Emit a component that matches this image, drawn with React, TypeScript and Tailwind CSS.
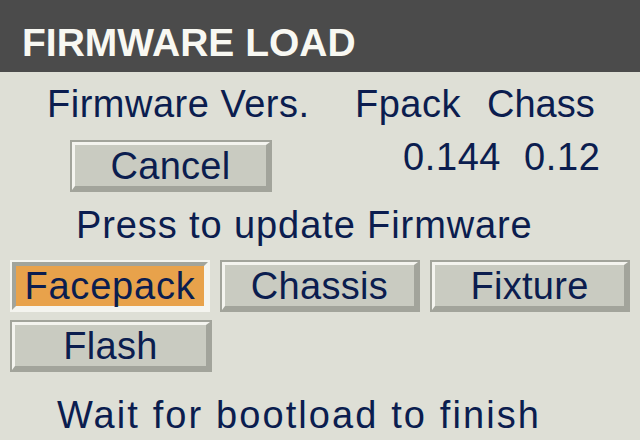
import React from "react";

function Raised({ w, label }: { w: string; label: string }) {
  return (
    <div className={`${w} h-[52px] border-2 border-[#a2a49b] flex shrink-0`}>
      <div className="flex-1 flex items-center justify-center bg-[#c9cbc1] border-t-[3px] border-l-[3px] border-b-[4px] border-r-[4px] border-t-[#f4f4ef] border-l-[#f4f4ef] border-b-[#a2a49b] border-r-[#a2a49b]">
        <span className="text-[38px] leading-[38px] tracking-[0.3px]">{label}</span>
      </div>
    </div>
  );
}

function Pressed({ w, label }: { w: string; label: string }) {
  return (
    <div className={`${w} h-[52px] border-2 border-[#f4f4ef] flex shrink-0`}>
      <div className="flex-1 flex items-center justify-center bg-[#e8a24b] border-t-4 border-l-4 border-b-[4px] border-r-[4px] border-t-[#a2a49b] border-l-[#a2a49b] border-b-[#f4f4ef] border-r-[#f4f4ef]">
        <span className="text-[38px] leading-[38px] tracking-[0.8px]">{label}</span>
      </div>
    </div>
  );
}

export default function App() {
  return (
    <div className="w-[640px] h-[440px] overflow-hidden bg-[#dedfd6] text-[#0b1d4f] font-['Liberation_Sans',Arial,sans-serif]">
      <div className="h-[72px] bg-[#4b4b4b] pl-[22px] pt-[23px]">
        <span className="text-[39px] leading-[39px] font-bold text-[#f8f8f2] block">FIRMWARE LOAD</span>
      </div>
      <div className="mt-[13px] h-[38px] flex text-[38px] leading-[38px] tracking-[0.5px]">
        <span className="ml-[47px] w-[308px]">Firmware Vers.</span>
        <span className="w-[132px]">Fpack</span>
        <span className="tracking-[0px]">Chass</span>
      </div>
      <div className="mt-[17px] flex items-start">
        <div className="ml-[70px]">
          <Raised w="w-[202px]" label="Cancel" />
        </div>
        <span className="ml-[131px] -mt-[2px] w-[121px] text-[38px] leading-[38px] tracking-[0.6px]">0.144</span>
        <span className="-mt-[2px] text-[38px] leading-[38px] tracking-[0.6px]">0.12</span>
      </div>
      <div className="mt-[14px] pl-[76px] text-[38px] leading-[38px] tracking-[0.9px]">Press to update Firmware</div>
      <div className="mt-[16px] pl-[10px] flex gap-[10px]">
        <Pressed w="w-[200px]" label="Facepack" />
        <Raised w="w-[200px]" label="Chassis" />
        <Raised w="w-[200px]" label="Fixture" />
      </div>
      <div className="mt-[8px] pl-[10px] flex">
        <Raised w="w-[202px]" label="Flash" />
      </div>
      <div className="mt-[24px] pl-[57px] text-[38px] leading-[38px] tracking-[2.1px]">Wait for bootload to finish</div>
    </div>
  );
}
